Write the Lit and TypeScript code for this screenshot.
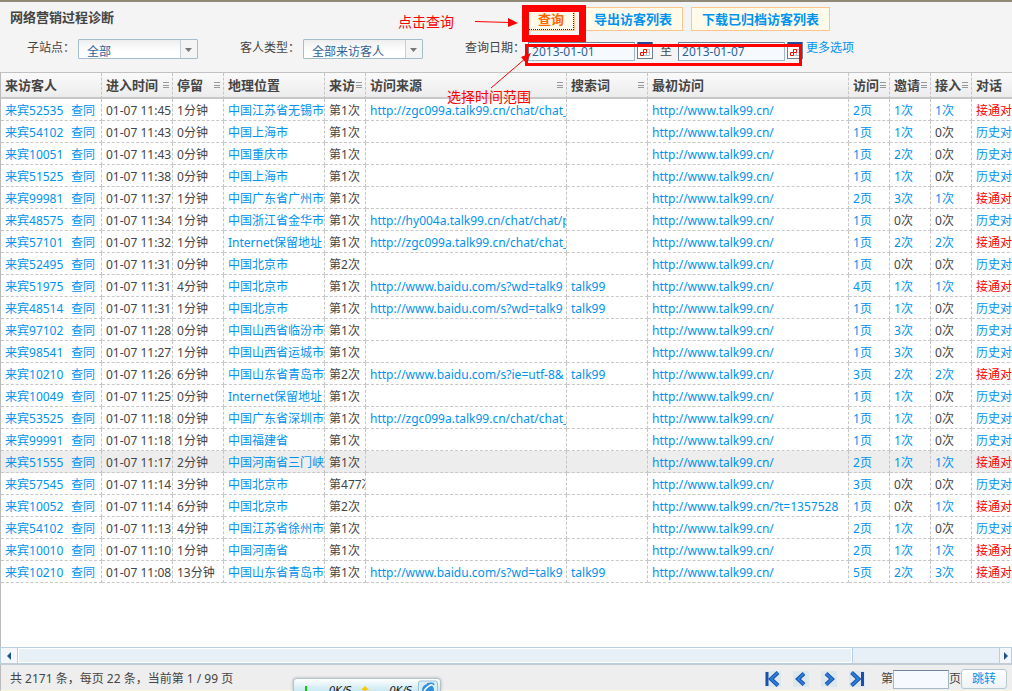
import { LitElement, html, css, svg, nothing } from "lit";
import { customElement, state } from "lit/decorators.js";
import { classMap } from "lit/directives/class-map.js";

interface Visit {
  id: string;
  time: string;
  stay: string;
  place: string;
  nth: string;
  source: string;
  word: string;
  first: string;
  pages: number;
  invites: number;
  accepts: number;
  live: boolean;
}

const HOME = "http://www.talk99.cn/";
const ZGC = "http://zgc099a.talk99.cn/chat/chat_";
const HY = "http://hy004a.talk99.cn/chat/chat/p";
const BAIDU = "http://www.baidu.com/s?wd=talk9";
const BAIDU_IE = "http://www.baidu.com/s?ie=utf-8&";

const v = (
  id: string, time: string, stay: string, place: string, nth: string,
  source: string, word: string, pages: number, invites: number,
  accepts: number, live: boolean, first = HOME,
): Visit => ({ id, time, stay, place, nth, source, word, first, pages, invites, accepts, live });

const VISITS: Visit[] = [
  v("52535", "11:45", "1", "中国江苏省无锡市", "1", ZGC, "", 2, 1, 1, true),
  v("54102", "11:43", "0", "中国上海市", "1", "", "", 1, 1, 0, false),
  v("10051", "11:43", "0", "中国重庆市", "1", "", "", 1, 2, 0, false),
  v("51525", "11:38", "0", "中国上海市", "1", "", "", 1, 1, 0, false),
  v("99981", "11:37", "1", "中国广东省广州市", "1", "", "", 2, 3, 1, true),
  v("48575", "11:34", "1", "中国浙江省金华市", "1", HY, "", 1, 0, 0, false),
  v("57101", "11:32", "1", "Internet保留地址", "1", ZGC, "", 1, 2, 2, true),
  v("52495", "11:31", "0", "中国北京市", "2", "", "", 1, 0, 0, false),
  v("51975", "11:31", "4", "中国北京市", "1", BAIDU, "talk99", 4, 1, 1, true),
  v("48514", "11:31", "1", "中国北京市", "1", BAIDU, "talk99", 1, 1, 0, false),
  v("97102", "11:28", "0", "中国山西省临汾市", "1", "", "", 1, 3, 0, false),
  v("98541", "11:27", "1", "中国山西省运城市", "1", "", "", 1, 3, 0, false),
  v("10210", "11:26", "6", "中国山东省青岛市", "2", BAIDU_IE, "talk99", 3, 2, 2, true),
  v("10049", "11:25", "0", "Internet保留地址", "1", "", "", 1, 1, 0, false),
  v("53525", "11:18", "0", "中国广东省深圳市", "1", ZGC, "", 1, 1, 0, false),
  v("99991", "11:18", "1", "中国福建省", "1", "", "", 1, 1, 0, false),
  v("51555", "11:17", "2", "中国河南省三门峡", "1", "", "", 2, 1, 1, true),
  v("57545", "11:14", "3", "中国北京市", "477", "", "", 3, 0, 0, false),
  v("10052", "11:14", "6", "中国北京市", "2", "", "", 1, 0, 1, true, HOME + "?t=1357528"),
  v("54102", "11:13", "4", "中国江苏省徐州市", "1", "", "", 2, 1, 0, false),
  v("10010", "11:10", "1", "中国河南省", "1", "", "", 2, 1, 1, true),
  v("10210", "11:08", "13", "中国山东省青岛市", "1", BAIDU, "talk99", 5, 2, 3, true),
];

const COLUMNS: { label: string; size: string; menu: boolean }[] = [
  { label: "来访客人", size: "w101", menu: false },
  { label: "进入时间", size: "w71", menu: true },
  { label: "停留", size: "w51", menu: true },
  { label: "地理位置", size: "w101", menu: false },
  { label: "来访", size: "w41", menu: true },
  { label: "访问来源", size: "w201", menu: true },
  { label: "搜索词", size: "w81", menu: true },
  { label: "最初访问", size: "w201", menu: false },
  { label: "访问", size: "w41", menu: true },
  { label: "邀请", size: "w41", menu: true },
  { label: "接入", size: "w41", menu: true },
  { label: "对话", size: "w201", menu: false },
];

const menuGlyph = html`<svg class="lines" width="6" height="6" viewBox="0 0 6 6" aria-hidden="true">
  <path d="M0 .5h6M0 3h6M0 5.5h6" stroke="#999" shape-rendering="crispEdges" />
</svg>`;

const calendar = html`<svg width="16" height="17" viewBox="0 0 16 17" aria-hidden="true">
  <rect x="0" y="0" width="16" height="17" fill="#6f7f92" />
  <rect x="1" y="4" width="14" height="12" fill="#fff" />
  <rect x="1" y="0" width="14" height="3" fill="#24489a" />
  <path d="M9.500 7.500h3v6h-6M12.500 10.500h-3v3" fill="none" stroke="#b4c4d4" />
  <path d="M6.500 7.500h3v3h-3zM3.500 10.500h3v3h-3z" fill="none" stroke="#f01000" />
</svg>`;

const pagerPaths: Record<string, [string, string]> = {
  首页: ["M2 1v14", "M13 1.500L6 8l7 6.500"],
  上一页: ["", "M11 2.500L5 8l6 5.500"],
  下一页: ["", "M5 2.500L11 8l-6 5.500"],
  末页: ["M13.500 1v14", "M2.500 1.500L9.500 8l-7 6.500"],
};

@customElement("app-root")
export class AppRoot extends LitElement {
  static styles = css`
    :host {
      display: flex;
      flex-direction: column;
      position: relative;
      box-sizing: border-box;
      height: 100vh;
      overflow: hidden;
      background: #f4f4f4;
      border-top: 2px solid #8f8976;
      color: #444;
      font: 12px/18px "Noto Sans", "Noto Sans CJK SC", sans-serif;
    }
    a { color: #0093ee; text-decoration: none; }
    button, input, select { font: inherit; box-sizing: border-box; margin: 0; }
    button { cursor: pointer; }
    svg { display: block; }

    .tools { padding: 5px 10px 10px; }
    .titlebar { display: flex; gap: 8px; }
    .title {
      flex: 0 0 509px;
      margin: 0;
      font-size: 13px;
      line-height: 20px;
      font-weight: 700;
    }
    .action {
      height: 24px;
      padding: 0 10px;
      border: 1px solid #ffc48c;
      background: #fffbea;
      color: #0093ee;
      font-size: 13px;
      line-height: 20px;
      font-weight: 700;
      white-space: nowrap;
    }
    .action.main { color: #f60; outline: 1px dotted #222; outline-offset: -2px; }

    .filters { display: flex; gap: 42px; padding: 8px 17px 0; white-space: nowrap; }
    .field { display: flex; gap: 3px; height: 23px; }
    .pick { position: relative; height: 20px; }
    .pick select {
      appearance: none;
      display: block;
      width: 120px;
      height: 20px;
      padding: 4px 18px 0 8px;
      border: 1px solid #a3bdcb;
      border-radius: 1px;
      background: linear-gradient(#eee, #fff 60%);
      color: #2f6296;
      line-height: 16px;
    }
    .pick svg { position: absolute; right: 1px; top: 1px; pointer-events: none; }
    .dates { display: flex; gap: 2px; padding-top: 3px; }
    .date {
      width: 107px;
      height: 19px;
      padding: 0 3px;
      border: 1px solid #a3b7cb;
      border-top-color: #6f8297;
      border-left-color: #6f8297;
      background: #f6fafe;
      color: #2f6296;
    }
    .cal { padding: 0; border: 0; background: none; height: 17px; }
    .to { padding: 0 4px 0 5px; }

    .grid {
      flex: 1;
      min-height: 0;
      overflow: hidden;
      border-top: 1px solid #c2c2c2;
      border-left: 1px solid #bbb;
      background: #fff;
    }
    table { table-layout: fixed; width: 1172px; border-collapse: separate; border-spacing: 0; }
    .w41 { width: 41px; }
    .w51 { width: 51px; }
    .w71 { width: 71px; }
    .w81 { width: 81px; }
    .w101 { width: 101px; }
    .w201 { width: 201px; }
    th, td {
      box-sizing: border-box;
      padding: 0 0 0 4px;
      border-right: 1px dashed #c4c4c4;
      overflow: hidden;
      white-space: nowrap;
      text-align: left;
    }
    th {
      height: 26px;
      padding-right: 3px;
      border-bottom: 2px solid #c8c8c8;
      background: linear-gradient(#fafafa, #ececec);
      font-size: 13px;
      line-height: 24px;
      font-weight: 700;
    }
    .head { display: flex; justify-content: space-between; align-items: center; height: 24px; }
    .lines { flex: none; }
    td {
      height: 22px;
      padding-top: 2px;
      border-bottom: 1px dashed #c8c8c8;
      line-height: 19px;
    }
    .hover td { background: #ededed; }
    .guest { display: flex; }
    .guest a:first-child { flex: 0 0 66px; }
    .live { color: #f00; }

    .scroll {
      display: flex;
      height: 18px;
      box-sizing: border-box;
      border: 1px solid #b7cfe2;
      border-bottom: 2px solid #c3cdd6;
      background: #e7eff7;
    }
    .step {
      display: grid;
      place-items: center;
      flex: 0 0 17px;
      padding: 0;
      border: 0 solid #b7cfe2;
      background: #f4f8fc;
    }
    .step.left { border-right-width: 1px; }
    .step.right { flex-basis: 12px; border-left-width: 1px; }
    .track { flex: 1; display: flex; }
    .thumb {
      flex: 0 0 85%;
      box-sizing: border-box;
      border: 1px solid #fff;
      outline: 1px solid #b7cfe2;
    }

    .foot {
      display: flex;
      align-items: center;
      justify-content: space-between;
      height: 26px;
      box-sizing: border-box;
      padding: 3px 5px 0 9px;
      border-bottom: 1px solid #f8f6dc;
      border-left: 1px solid #bbb;
      background: #eee;
      white-space: nowrap;
    }
    .pager { display: flex; align-items: center; }
    .arrows { display: flex; gap: 12px; padding-right: 16px; }
    .arrow { padding: 0; border: 0; background: #dbe9ee; }
    .jump { display: flex; align-items: center; }
    .page {
      width: 56px;
      height: 19px;
      border: 1px solid #a3b7cb;
      border-top-color: #6f8297;
      background: #f6fafe;
    }
    .go {
      width: 46px;
      height: 20px;
      padding: 0;
      border: 1px solid #b5c9d3;
      border-radius: 3px;
      background: linear-gradient(#fff, #eef3f6);
      color: #0093ee;
    }

    .tray {
      position: absolute;
      left: 293px;
      bottom: 0;
      width: 148px;
      height: 13px;
      box-sizing: border-box;
      overflow: hidden;
      border: 1px solid #b5c3ca;
      border-bottom: 0;
      border-radius: 4px 4px 0 0;
      background: linear-gradient(#fff, #c9e8f2);
      box-shadow: 0 0 3px #aaa;
      color: #111;
      font: italic 10px/24px "DejaVu Sans", sans-serif;
      display: flex;
      align-items: flex-start;
    }
    .rate { width: 30px; padding: 0 6px 0 20px; }
    .rate.up { padding-right: 3px; }
    .tray svg { flex: none; }
    .down { margin-left: 9px; }

    .ring, .note { position: absolute; pointer-events: none; box-sizing: border-box; }
    .ring { border: solid #f00; }
    .ring.query { left: 522px; top: 3px; width: 64px; height: 37px; border-width: 7px; }
    .ring.range { left: 525px; top: 42px; width: 277px; height: 22px; border-width: 3px; }
    .note { color: #f00; font-size: 14px; line-height: 20px; white-space: nowrap; }
    .note.query { left: 398px; top: 10px; }
    .note.range { left: 447px; top: 85px; }
    .pointers { position: absolute; left: 470px; top: 10px; pointer-events: none; }
  `;

  @state() private hovered = 16;

  private picker(id: string, options: string[]) {
    return html`<span class="pick">
      <select id=${id}>${options.map((o) => html`<option>${o}</option>`)}</select>
      <svg width="17" height="18" viewBox="0 0 17 18" aria-hidden="true">
        <rect width="17" height="18" fill="#f4f4f4" />
        <path d="M.5 0v18" stroke="#c5d0d6" />
        <path d="M5 8h7l-3.500 4z" fill="#777" />
      </svg>
    </span>`;
  }

  private count(n: number) {
    return n > 0 ? html`<a href="#">${n}次</a>` : html`${n}次`;
  }

  private row(r: Visit, i: number) {
    return html`<tr class=${classMap({ hover: i === this.hovered })} @mouseenter=${() => (this.hovered = i)}>
      <td><div class="guest"><a href="#">来宾${r.id}</a><a href="#">查同</a></div></td>
      <td>01-07 ${r.time}</td>
      <td>${r.stay}分钟</td>
      <td><a href="#">${r.place}</a></td>
      <td>第${r.nth}次</td>
      <td>${r.source ? html`<a href="#">${r.source}</a>` : nothing}</td>
      <td>${r.word ? html`<a href="#">${r.word}</a>` : nothing}</td>
      <td><a href="#">${r.first}</a></td>
      <td><a href="#">${r.pages}页</a></td>
      <td>${this.count(r.invites)}</td>
      <td>${this.count(r.accepts)}</td>
      <td><a href="#" class=${classMap({ live: r.live })}>${r.live ? "接通对话" : "历史对话"}</a></td>
    </tr>`;
  }

  private arrow(name: string) {
    const [bar, chevron] = pagerPaths[name];
    return html`<button class="arrow" aria-label=${name}>
      <svg width="16" height="16" viewBox="0 0 16 16">
        ${bar ? svg`<path d=${bar} fill="none" stroke="#1c50a8" stroke-width="3" />` : nothing}
        <path d=${chevron} fill="none" stroke="#1c50a8" stroke-width="4" />
        <path d=${chevron} fill="none" stroke="#2a7edc" stroke-width="2" />
      </svg>
    </button>`;
  }

  render() {
    return html`
      <header class="tools">
        <div class="titlebar">
          <h1 class="title">网络营销过程诊断</h1>
          <button class="action main">查询</button>
          <button class="action">导出访客列表</button>
          <button class="action">下载已归档访客列表</button>
        </div>
        <form class="filters">
          <div class="field"><label for="site">子站点：</label>${this.picker("site", ["全部"])}</div>
          <div class="field"><label for="kind">客人类型：</label>${this.picker("kind", ["全部来访客人"])}</div>
          <div class="field">
            <label for="from">查询日期：</label>
            <div class="dates">
              <input class="date" id="from" type="text" value="2013-01-01" />
              <button class="cal" type="button" aria-label="开始日期">${calendar}</button>
              <label class="to" for="until">至</label>
              <input class="date" id="until" type="text" value="2013-01-07" />
              <button class="cal" type="button" aria-label="结束日期">${calendar}</button>
            </div>
            <a href="#">更多选项</a>
          </div>
        </form>
      </header>

      <main class="grid">
        <table>
          <colgroup>${COLUMNS.map((c) => html`<col class=${c.size} />`)}</colgroup>
          <thead>
            <tr>
              ${COLUMNS.map((c) => html`<th scope="col"><div class="head">${c.label}${c.menu ? menuGlyph : nothing}</div></th>`)}
            </tr>
          </thead>
          <tbody>${VISITS.map((r, i) => this.row(r, i))}</tbody>
        </table>
      </main>

      <div class="scroll">
        <button class="step left" aria-label="向左滚动">
          <svg width="4" height="8" viewBox="0 0 4 8"><path d="M4 0v8L0 4z" fill="#1f5590" /></svg>
        </button>
        <div class="track"><div class="thumb"></div></div>
        <button class="step right" aria-label="向右滚动">
          <svg width="4" height="8" viewBox="0 0 4 8"><path d="M0 0v8l4-4z" fill="#1f5590" /></svg>
        </button>
      </div>

      <footer class="foot">
        <span>共 2171 条，每页 22 条，当前第 1 / 99 页</span>
        <div class="pager">
          <div class="arrows">${Object.keys(pagerPaths).map((n) => this.arrow(n))}</div>
          <label class="jump">第<input class="page" type="text" />页</label>
          <button class="go">跳转</button>
        </div>
      </footer>

      <div class="tray">
        <svg class="down" width="6" height="13" viewBox="0 0 6 13"><path d="M2 7h2v6h-2z" fill="#00d000" /></svg>
        <span class="rate">0K/S</span>
        <svg width="10" height="13" viewBox="0 0 10 13"><path d="M5 7l4 4H6v2H4v-2H1z" fill="#ffc800" /></svg>
        <span class="rate up">0K/S</span>
        <svg width="23" height="13" viewBox="0 0 23 13">
          <path d="M1.500 13V4q0-2 2-2h15q2 0 2 2v9" fill="#d8eef6" stroke="#9fc3d2" />
          <circle cx="11" cy="11" r="6" fill="#2f8fe0" />
          <path d="M7 12q4-6 9-6.500" fill="none" stroke="#fff" stroke-width="1.500" />
          <path d="M10 5q6-2 7 1" fill="none" stroke="#2f8fe0" stroke-width="1.500" />
        </svg>
      </div>

      <div class="ring query"></div>
      <div class="ring range"></div>
      <span class="note query">点击查询</span>
      <span class="note range">选择时间范围</span>
      <svg class="pointers" width="70" height="80" viewBox="0 0 70 80" aria-hidden="true">
        <path d="M5 9.500L40 10.500M21 76L56 46" stroke="#f00" fill="none" />
        <path d="M38 6l10 5-10 4zM61 41l-5 10-5-6z" fill="#f00" />
      </svg>
    `;
  }
}
